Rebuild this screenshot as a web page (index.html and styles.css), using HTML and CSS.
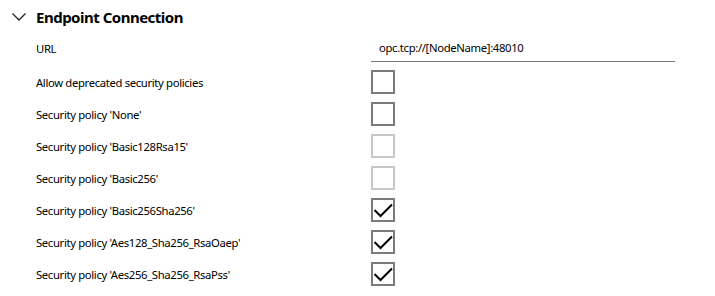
FILE: index.html
```html
<!DOCTYPE html>
<html lang="en">
<head>
<meta charset="UTF-8">
<title>Endpoint Connection</title>
<link rel="stylesheet" href="styles.css">
</head>
<body>
<section class="group">
    <div class="group-header">
        <svg class="chevron" viewBox="0 0 14 8"><path d="M0.5 0.5 L7 7 L13.5 0.5"></path></svg>
        <h2>Endpoint Connection</h2>
    </div>

    <div class="row row--url">
        <span class="label">URL</span>
        <div class="text-field">opc.tcp://[NodeName]:48010</div>
    </div>

    <div class="rows">
        <div class="row">
            <span class="label">Allow deprecated security policies</span>
            <span class="checkbox"></span>
        </div>
        <div class="row">
            <span class="label">Security policy 'None'</span>
            <span class="checkbox"></span>
        </div>
        <div class="row">
            <span class="label">Security policy 'Basic128Rsa15'</span>
            <span class="checkbox checkbox--disabled"></span>
        </div>
        <div class="row">
            <span class="label">Security policy 'Basic256'</span>
            <span class="checkbox checkbox--disabled"></span>
        </div>
        <div class="row">
            <span class="label">Security policy 'Basic256Sha256'</span>
            <span class="checkbox"><svg viewBox="0 0 24 24"><path d="M3.5 12 L9.5 18 L21 6.5"></path></svg></span>
        </div>
        <div class="row">
            <span class="label">Security policy 'Aes128_Sha256_RsaOaep'</span>
            <span class="checkbox"><svg viewBox="0 0 24 24"><path d="M3.5 12 L9.5 18 L21 6.5"></path></svg></span>
        </div>
        <div class="row">
            <span class="label">Security policy 'Aes256_Sha256_RsaPss'</span>
            <span class="checkbox"><svg viewBox="0 0 24 24"><path d="M3.5 12 L9.5 18 L21 6.5"></path></svg></span>
        </div>
    </div>
</section>
</body>
</html>
```

FILE: styles.css
```css
body {
    margin: 0;
    background: #fff;
    color: #000;
    font-family: "Noto Sans", "Open Sans", sans-serif;
}

/* --- section header --- */
.group-header {
    display: flex;
    align-items: center;
    height: 34px;
    padding-left: 12px;
}

.chevron {
    width: 14px;
    height: 8px;
    margin-right: 10px;
    fill: none;
    stroke: #222;
    stroke-width: 1.3;
}

.group-header h2 {
    margin: 0;
    font-size: 15px;
    font-weight: bold;
    letter-spacing: -0.5px;
}

/* --- rows --- */
.row {
    display: flex;
    align-items: center;
    height: 32px;
    padding-left: 36px;
    font-size: 11.3px;
    letter-spacing: -0.35px;
}

.label {
    width: 335px;
}

.row--url {
    height: 28px;
    align-items: stretch;
}

.row--url .label {
    display: flex;
    align-items: center;
}

.text-field {
    display: flex;
    align-items: center;
    width: 296px;
    padding-left: 8px;
    border-bottom: 1px solid #7a7a7a;
}

.rows {
    margin-top: 4px;
}

.checkbox {
    box-sizing: border-box;
    width: 24px;
    height: 24px;
    border: 2px solid #7a7a7a;
    position: relative;
}

.checkbox--disabled {
    border-color: #c8c8c8;
}

.checkbox svg {
    position: absolute;
    top: -2px;
    left: -2px;
    width: 24px;
    height: 24px;
    fill: none;
    stroke: #000;
    stroke-width: 2;
}
```
